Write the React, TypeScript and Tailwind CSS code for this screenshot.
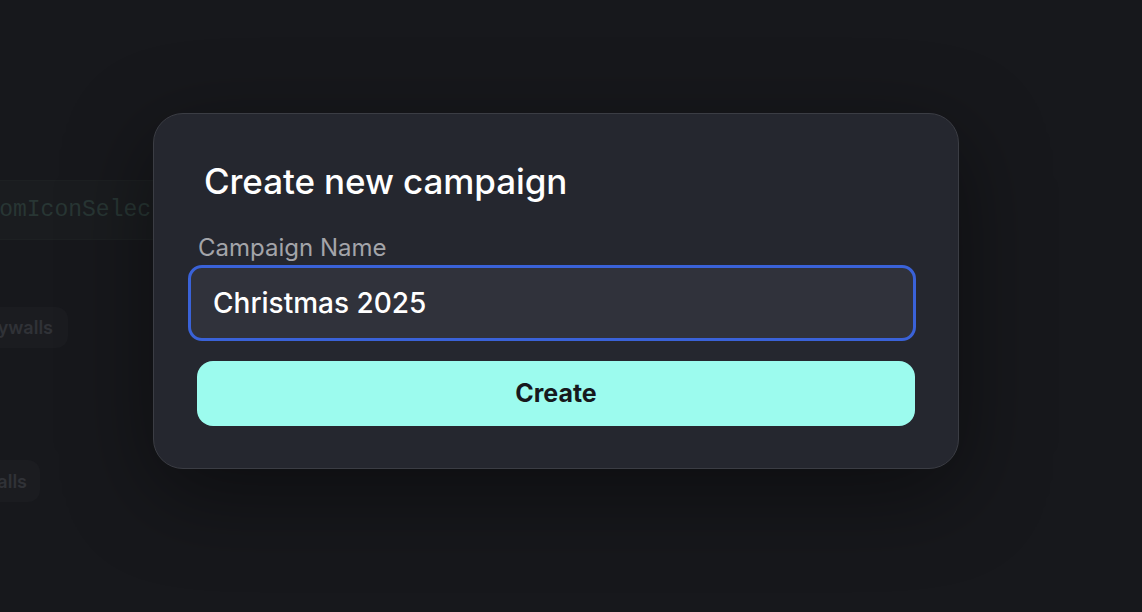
import React, { useState } from 'react';

export default function App() {
  const [name, setName] = useState('Christmas 2025');

  return (
    <div
      className="relative w-[1142px] h-[612px] overflow-hidden bg-[#17181c]"
      style={{ fontFamily: 'Inter, "Noto Sans", sans-serif' }}
    >
      {/* Background content, dimmed behind the dialog */}
      <div className="flex flex-col pt-[180px]">
        <div className="h-[60px] w-[260px] bg-[#1a1c1f] border-y border-[#1d2022] flex items-center -ml-[56px]">
          <span
            className="text-[23px] text-[#283634] whitespace-nowrap"
            style={{ fontFamily: '"Liberation Mono", "DejaVu Sans Mono", monospace' }}
          >
            CustomIconSelector
          </span>
        </div>
        <div className="mt-[67px] -ml-[22px] w-[90px] h-[41px] rounded-xl bg-[#1b1c20] flex items-center justify-end pr-[15px]">
          <span className="text-[18px] font-semibold text-[#303237] whitespace-nowrap">Paywalls</span>
        </div>
        <div className="mt-[112px] -ml-[50px] w-[90px] h-[42px] rounded-xl bg-[#1b1c20] flex items-center justify-end pr-[13px]">
          <span className="text-[18px] font-semibold text-[#303237] whitespace-nowrap">Walls</span>
        </div>
      </div>

      {/* Dialog */}
      <div className="absolute left-[153px] top-[113px] w-[806px] h-[356px] rounded-[30px] border border-[#3b3d44] bg-[#25272f] shadow-[0_24px_90px_rgba(0,0,0,0.45)] pt-[45px] pl-[43px] pr-[42px]">
        <h2 className="ml-[7px] text-[35px] leading-[44px] font-medium text-white tracking-[-0.1px]">
          Create new campaign
        </h2>
        <label className="block ml-[1px] mt-[31px] text-[24px] leading-[28px] text-[#a3a4a9]">
          Campaign Name
        </label>
        <input
          value={name}
          onChange={(e) => setName(e.target.value)}
          className="block -ml-[9px] w-[728px] h-[76px] mt-[3px] rounded-[14px] border-[3px] border-[#3a62d8] bg-[#30323b] px-[22px] text-[28px] font-medium text-white outline-none"
        />
        <button className="block mt-[20px] w-[718px] h-[65px] rounded-[16px] bg-[#9cfbee] text-[25px] font-bold text-[#17191d]">
          Create
        </button>
      </div>
    </div>
  );
}
